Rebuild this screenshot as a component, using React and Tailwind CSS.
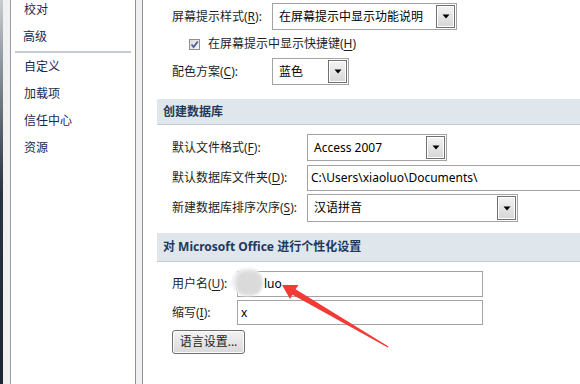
import React from "react";

const FONT = { fontFamily: '"Noto Sans", "Noto Sans CJK SC", sans-serif' };

function Key({ k }) {
  return <span className="underline underline-offset-[2px]">{k}</span>;
}

function DropBtn() {
  return (
    <div className="h-full w-[19px] border border-[#707070] bg-gradient-to-b from-[#f4f4f4] to-[#d6d6d6] flex items-center justify-center shrink-0 shadow-[inset_0_0_0_1px_#ffffff]">
      <svg width="8" height="5" viewBox="0 0 8 5">
        <path d="M0.5 0.5 H7.5 L4 4.5 Z" fill="#000" />
      </svg>
    </div>
  );
}

function Select({ w, h, text }) {
  return (
    <div
      className="flex items-stretch border border-[#a3a3a3] bg-white p-[1px]"
      style={{ width: w, height: h }}
    >
      <div className="flex-1 flex items-center pl-[5px] text-[12px] text-black whitespace-nowrap overflow-hidden">
        {text}
      </div>
      <DropBtn />
    </div>
  );
}

function Label({ w, children }) {
  return (
    <div className="text-[12px] text-[#1e1e1e] whitespace-nowrap shrink-0" style={{ width: w }}>
      {children}
    </div>
  );
}

function Header({ children, h }) {
  return (
    <div
      className="ml-[14px] bg-[#dfe6ec] border-b border-[#c3cad1] flex items-center pl-[6px] text-[12px] font-bold text-[#1e395b] whitespace-nowrap"
      style={{ height: h }}
    >
      {children}
    </div>
  );
}

export default function App() {
  const sideItems1 = ["校对", "高级"];
  const sideItems2 = ["自定义", "加载项", "信任中心", "资源"];
  return (
    <div className="w-[580px] h-[384px] overflow-hidden flex bg-white relative" style={FONT}>
      {/* left desktop strip */}
      <div className="w-[3px] h-full bg-gradient-to-b from-[#c8ccd0] via-[#2a3440] to-[#1c2530] shrink-0" />
      <div className="w-[7px] h-full bg-[#f0f0f0] shrink-0" />
      <div className="w-[1px] h-full bg-[#9b9ba3] shrink-0" />
      {/* sidebar */}
      <div className="w-[124px] h-full bg-white shrink-0 flex flex-col mt-[-4px]">
        {sideItems1.map((t, i) => (
          <div key={t} className={`h-[27px] flex items-center text-[12px] text-[#1a2850] ${i === 0 ? "pl-[13px]" : "pl-[12px]"}`}>
            {t}
          </div>
        ))}
        <div className="h-[3px] flex items-center">
          <div className="ml-[4px] w-[116px] h-[2px] bg-[#c5cbd1]" />
        </div>
        {sideItems2.map((t) => (
          <div key={t} className="h-[27px] flex items-center pl-[13px] text-[12px] text-[#1a2850]">
            {t}
          </div>
        ))}
      </div>
      <div className="w-[1px] h-full bg-[#8f909a] shrink-0" />
      <div className="w-[6px] h-full bg-[#f0f0f0] shrink-0" />
      <div className="w-[1px] h-full bg-[#8f909a] shrink-0" />
      {/* content */}
      <div className="flex-1 h-full flex flex-col pt-[3px] min-w-0">
        <div className="flex items-center h-[27px] pl-[29px]">
          <Label w={100}>屏幕提示样式(<Key k="R" />):</Label>
          <Select w={185} h={27} text="在屏幕提示中显示功能说明" />
        </div>
        <div className="flex items-center h-[16px] mt-[6px] pl-[46px]">
          <div className="w-[11px] h-[11px] border border-[#8e8f8f] bg-gradient-to-br from-[#dcdcdc] to-[#f6f6f6] flex items-center justify-center shrink-0">
            <svg width="9" height="9" viewBox="0 0 9 9">
              <path d="M1.5 4.5 L3.6 7 L7.8 1.5" stroke="#4b5f95" strokeWidth="1.8" fill="none" />
            </svg>
          </div>
          <div className="ml-[8px] text-[12px] text-[#1e1e1e] whitespace-nowrap">
            在屏幕提示中显示快捷键(<Key k="H" />)
          </div>
        </div>
        <div className="flex items-center h-[27px] mt-[6px] pl-[29px]">
          <Label w={100}>配色方案(<Key k="C" />):</Label>
          <Select w={77} h={27} text="蓝色" />
        </div>

        <div className="mt-[14px]">
          <Header h={26}>创建数据库</Header>
        </div>

        <div className="flex items-center h-[27px] mt-[9px] pl-[29px]">
          <Label w={135}>默认文件格式(<Key k="F" />):</Label>
          <Select w={140} h={27} text="Access 2007" />
        </div>
        <div className="flex items-center h-[26px] mt-[4px] pl-[29px]">
          <Label w={135}>默认数据库文件夹(<Key k="D" />):</Label>
          <div className="h-full w-[300px] shrink-0 border border-[#a3a3a3] bg-white flex items-center pl-[3px] text-[12px] text-black whitespace-nowrap">
            C:\Users\xiaoluo\Documents\
          </div>
        </div>
        <div className="flex items-center h-[28px] mt-[3px] pl-[29px]">
          <Label w={135}>新建数据库排序次序(<Key k="S" />):</Label>
          <Select w={211} h={28} text="汉语拼音" />
        </div>

        <div className="mt-[11px]">
          <Header h={29}>对 Microsoft Office 进行个性化设置</Header>
        </div>

        <div className="flex items-center h-[26px] mt-[9px] pl-[29px]">
          <Label w={65}>用户名(<Key k="U" />):</Label>
          <div className="relative h-full w-[246px] shrink-0 border border-[#a3a3a3] bg-white flex items-center pl-[26px] text-[12px] text-black">
            luo
            <div className="absolute left-[-6px] top-[-4px] w-[31px] h-[28px] rounded-[14px] bg-[#f0f0f0] blur-[1px]" />
            <div className="absolute left-[-2px] top-[-1px] w-[26px] h-[24px] rounded-[10px] bg-[#dadada] blur-[1.5px]" />
          </div>
        </div>
        <div className="flex items-center h-[25px] mt-[3px] pl-[29px]">
          <Label w={65}>缩写(<Key k="I" />):</Label>
          <div className="h-full w-[246px] shrink-0 border border-[#a3a3a3] bg-white flex items-center pl-[3px] text-[12px] text-black">
            x
          </div>
        </div>
        <div className="mt-[5px] pl-[29px]">
          <div className="w-[73px] h-[24px] rounded-[3px] border border-[#707070] bg-gradient-to-b from-[#f3f3f3] to-[#d9d9d9] flex items-center justify-center text-[12px] text-[#1e1e1e] shadow-[inset_0_0_0_1px_#fcfcfc]">
            语言设置...
          </div>
        </div>
      </div>

      {/* red arrow annotation */}
      <svg className="absolute left-0 top-0 pointer-events-none" width="580" height="384" viewBox="0 0 580 384">
        <polygon
          points="282,285 298.5,285 295.6,289.3 388.5,346.5 387.8,347.5 292.5,294.7 290,299"
          fill="#f23a36"
        />
      </svg>
    </div>
  );
}
